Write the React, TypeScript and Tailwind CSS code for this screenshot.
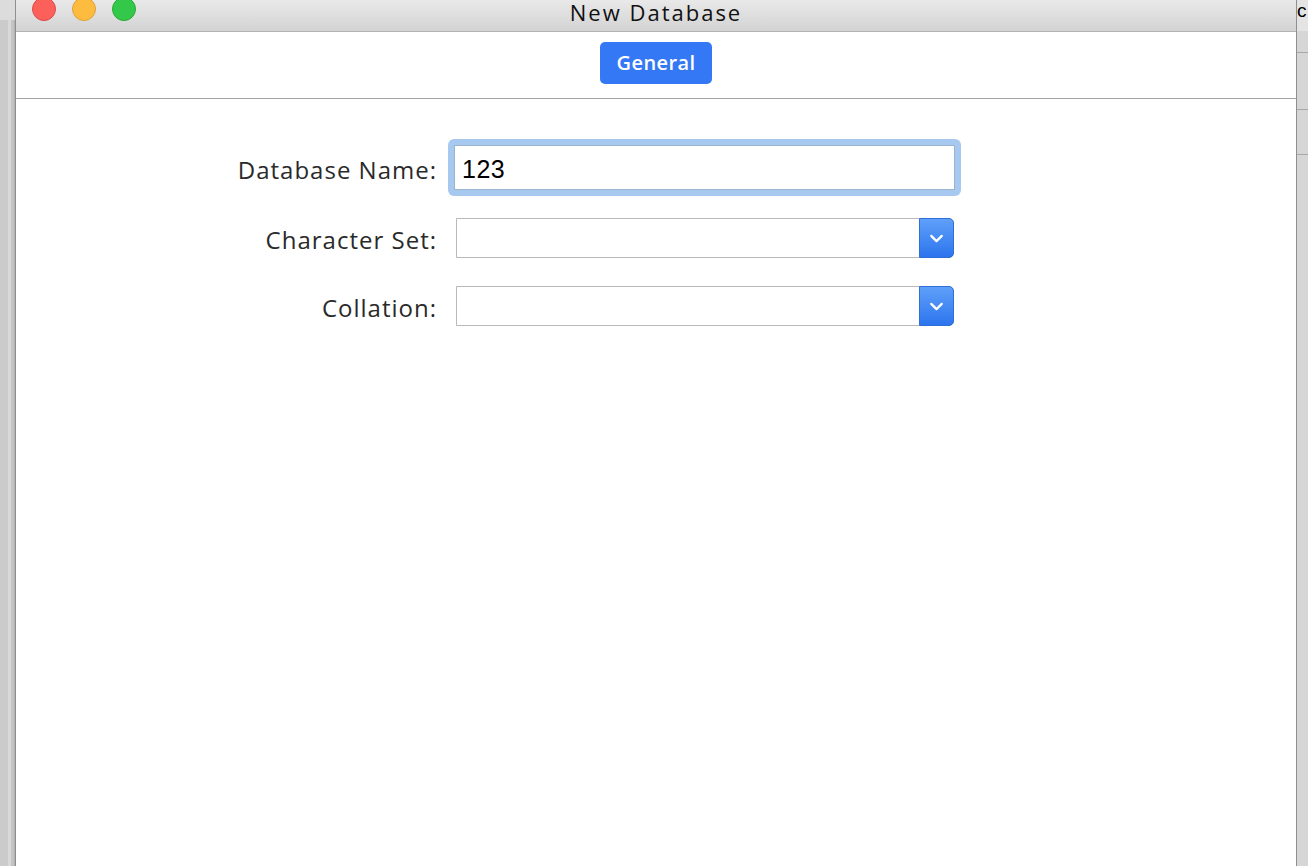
import { ChevronDown } from 'lucide-react'

const font = { fontFamily: '"Open Sans", "Liberation Sans", sans-serif' }

function SelectBox() {
  return (
    <div className="flex h-[40px] w-[498px] border border-[#b9b9b9] rounded-r-[5px] bg-white">
      <div className="flex-1" />
      <div className="w-[35px] -my-px -mr-px flex items-center justify-center rounded-r-[5px] bg-gradient-to-b from-[#5fa0f9] to-[#2c74ee] border border-[#2f6fd6]">
        <ChevronDown className="w-[21px] h-[21px] text-white" strokeWidth={2.6} />
      </div>
    </div>
  )
}

export default function App() {
  return (
    <div className="flex h-[866px] w-[1308px] overflow-hidden bg-[#d2d2d2]" style={font}>
      {/* left desktop strip */}
      <div className="w-[15px] flex flex-col">
        <div className="h-[20px] bg-[#dcdcdc]" />
        <div className="flex-1 flex bg-[#cbcbcb]">
          <div className="w-[8px]" />
          <div className="w-[3px] bg-[#d9d9d9]" />
          <div className="w-[3px] bg-[#c4c4c4]" />
          <div className="w-px bg-[#b0b0b0]" />
        </div>
      </div>

      {/* window */}
      <div className="flex-1 flex flex-col border-l border-r border-[#8f8f8f] bg-white">
        <div className="h-[32px] grid grid-cols-[1fr_auto_1fr] items-start bg-gradient-to-b from-[#e9e9e9] to-[#d3d3d3] border-b border-[#b3b3b3]">
          <div className="flex gap-[16px] pl-[16px] -mt-[3px]">
            <div className="w-[24px] h-[24px] rounded-full bg-[#fc605b] border border-[#de4a45]" />
            <div className="w-[24px] h-[24px] rounded-full bg-[#fdbc40] border border-[#dea236]" />
            <div className="w-[24px] h-[24px] rounded-full bg-[#34c84a] border border-[#27aa35]" />
          </div>
          <div className="text-[22px] leading-[24px] text-[#111]" style={{ letterSpacing: '2px' }}>
            New Database
          </div>
          <div />
        </div>

        <div className="h-[67px] flex items-start justify-center pt-[10px] border-b border-[#a5a5a5]">
          <div className="w-[112px] h-[42px] rounded-[5px] bg-[#3478f6] text-white text-[20px] font-semibold flex items-center justify-center" style={{ letterSpacing: '0.4px' }}>
            General
          </div>
        </div>

        <div className="flex flex-col pt-[40px] text-[#2a2a2a]" style={{ letterSpacing: '1px' }}>
          <div className="flex items-center h-[57px]">
            <div className="w-[421px] text-right text-[24px] pt-[4px]">Database Name:</div>
            <div className="ml-[11px] w-[513px] h-[57px] rounded-[6px] bg-[#a8c9ef] p-[6px]">
              <div className="h-full bg-white border border-[#9ab3cf] flex items-center pl-[7px] pt-[4px] text-[25px] text-black" style={{ fontFamily: '"Liberation Sans", sans-serif', letterSpacing: '0.5px' }}>
                123
              </div>
            </div>
          </div>
          <div className="flex items-center mt-[22px]">
            <div className="w-[421px] text-right text-[24px] pt-[3px]">Character Set:</div>
            <div className="ml-[19px]"><SelectBox /></div>
          </div>
          <div className="flex items-center mt-[28px]">
            <div className="w-[421px] text-right text-[24px] pt-[3px]">Collation:</div>
            <div className="ml-[19px]"><SelectBox /></div>
          </div>
        </div>
      </div>

      {/* right desktop strip */}
      <div className="w-[11px] flex flex-col bg-[#d6d6d6]">
        <div className="h-[31px] text-[19px] leading-[22px] text-black bg-[#e4e4e4]" style={{ fontFamily: '"Liberation Sans", sans-serif' }}>c</div>
        <div className="h-[22px] border-b border-[#a8a8a8]" />
        <div className="h-[57px] border-b border-[#a8a8a8]" />
        <div className="h-[45px] border-b border-[#a8a8a8]" />
        <div className="flex-1" />
      </div>
    </div>
  )
}
